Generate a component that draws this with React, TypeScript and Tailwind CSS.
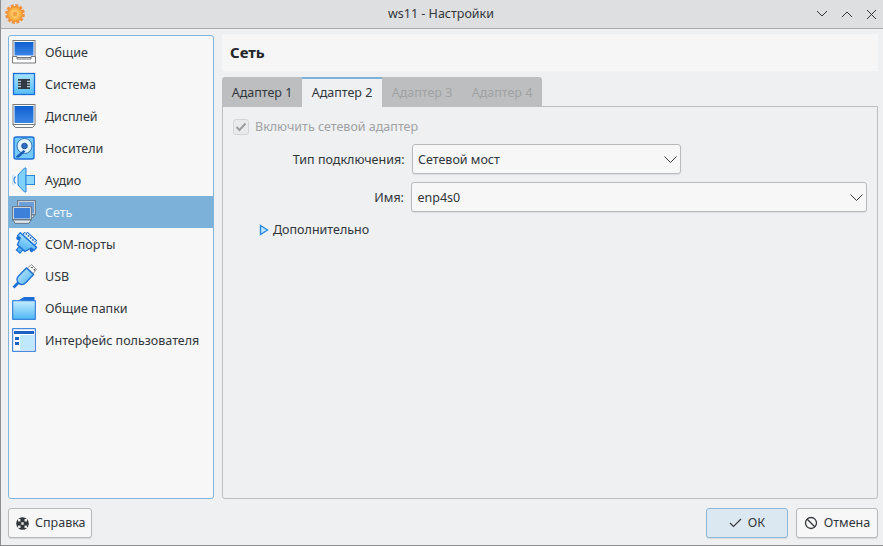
import React from "react";

const Monitor = ({ base }: { base?: boolean }) => (
  <svg width="24" height="24" viewBox="0 0 24 24">
    <defs>
      <linearGradient id="scr" x1="0" y1="0" x2="0" y2="1">
        <stop offset="0" stopColor="#0f5fd0" />
        <stop offset="1" stopColor="#3b86e4" />
      </linearGradient>
    </defs>
    <rect x="1" y="0.500" width="22" height={base ? 17 : 20} fill="#fff" stroke="#77797b" />
    <rect x="2.500" y="2" width="19" height={base ? 13.500 : 17} fill="url(#scr)" />
    {base ? (
      <path d="M0.500 16.500h4.500v2.500h14v-2.500h4.500v6.500H0.500z" fill="#fff" stroke="#77797b" />
    ) : (
      <path d="M1 20.500h22l-2.500 3h-17z" fill="#fff" stroke="#77797b" />
    )}
  </svg>
);

const Sys = () => (
  <svg width="24" height="24" viewBox="0 0 24 24">
    <defs>
      <linearGradient id="sb" x1="0" y1="0" x2="0" y2="1">
        <stop offset="0" stopColor="#a5e3ff" />
        <stop offset="1" stopColor="#55bdf5" />
      </linearGradient>
    </defs>
    <rect x="1.500" y="1.500" width="21" height="21" fill="url(#sb)" stroke="#1c6fd6" strokeWidth="1.300" />
    <rect x="6" y="7" width="12" height="10" fill="#333a46" />
    <path d="M6 9.300h3M6 12h3M6 14.700h3M15 9.300h3M15 12h3M15 14.700h3" stroke="#dff3ff" strokeWidth="1" />
  </svg>
);

const Disk = () => (
  <svg width="24" height="24" viewBox="0 0 24 24">
    <rect x="2" y="1" width="20" height="22" rx="2" fill="#74cbf9" stroke="#1c6fd6" strokeWidth="1.400" />
    <circle cx="12.500" cy="10" r="7.500" fill="#e4f6ff" stroke="#1c4f9c" strokeWidth="0.800" />
    <circle cx="12.500" cy="10" r="2.800" fill="#2e6fc8" stroke="#123e7e" strokeWidth="0.800" />
    <path d="M4 20.500l7.500-6.500 2 1.500-6.500 6H4z" fill="#1c5db8" />
  </svg>
);

const Audio = () => (
  <svg width="24" height="26" viewBox="0 0 24 26">
    <path d="M6 8L12.500 1H14v24h-1.500L6 18z" fill="#7fd1fa" stroke="#2f86d8" />
    <rect x="14" y="8.500" width="8.500" height="9" fill="#8fd8fb" stroke="#2f86d8" />
    <path d="M3.500 9.500c-2 2-2 5 0 7" fill="none" stroke="#2f86d8" strokeWidth="1.300" />
    <path d="M1.800 7.500c-2.400 3-2.400 8 0 11" fill="none" stroke="#a6d2f3" strokeWidth="0.900" />
  </svg>
);

const Net = () => (
  <svg width="24" height="24" viewBox="0 0 24 24">
    <rect x="5.700" y="0.700" width="17.600" height="14" fill="#e6ecf2" stroke="#5f6d7a" />
    <rect x="7" y="2" width="15" height="11.500" fill="#6a9edb" />
    <path d="M8 15h14l-1 2.500H9z" fill="#dfe7ee" stroke="#5f6d7a" strokeWidth="0.700" />
    <rect x="0.700" y="6.700" width="18.600" height="13" fill="#e6ecf2" stroke="#5f6d7a" />
    <rect x="2" y="8" width="16" height="10.500" fill="#3c80da" />
    <path d="M1 20h18l-2 3.300H3z" fill="#e6ebf0" stroke="#5f6d7a" strokeWidth="0.900" />
  </svg>
);

const Com = () => (
  <svg width="25" height="25" viewBox="0 0 25 25">
    <defs>
      <linearGradient id="cb" x1="0" y1="0" x2="1" y2="1">
        <stop offset="0" stopColor="#a5e3ff" />
        <stop offset="1" stopColor="#3fa5ee" />
      </linearGradient>
    </defs>
    <g transform="rotate(42 12.500 12.500)">
      <rect x="4.500" y="1.500" width="16" height="5" fill="#dff2fc" stroke="#1c6fd6" />
      <path d="M6 3.500h13" stroke="#1c4f9c" strokeWidth="1.500" strokeDasharray="1.500 1.500" />
      <path d="M1.500 6.500h22v4H20l-2.500 7h-10L5 10.500H1.500z" fill="url(#cb)" stroke="#1c6fd6" strokeWidth="1.300" />
      <circle cx="3.500" cy="12" r="1.900" fill="#1c6fd6" />
      <circle cx="21.500" cy="12" r="1.900" fill="#1c6fd6" />
      <rect x="10" y="17.500" width="5" height="4.500" fill="#4fb0f0" stroke="#1c6fd6" />
    </g>
  </svg>
);

const Usb = () => (
  <svg width="25" height="25" viewBox="0 0 25 25">
    <defs>
      <linearGradient id="ub" x1="0" y1="0" x2="1" y2="1">
        <stop offset="0" stopColor="#c8eeff" />
        <stop offset="1" stopColor="#45aef0" />
      </linearGradient>
    </defs>
    <path d="M15.500 4L19.500 0.500l5 5-3.500 4z" fill="#fff" stroke="#8a8c8e" />
    <path d="M19.500 3l1 1M21.800 5.300l1 1" stroke="#3a3c3e" strokeWidth="1.300" />
    <path d="M14.500 4l7 6.500-7.500 8c-2.500 2.500-5.500 2.500-7.500.500s-2-5 .500-7.500z" fill="url(#ub)" stroke="#1c6fd6" strokeWidth="1.300" />
    <path d="M6.500 18.500L1.500 23.500" stroke="#1c6fd6" strokeWidth="2.600" />
  </svg>
);

const Folder = () => (
  <svg width="24" height="24" viewBox="0 0 24 24">
    <defs>
      <linearGradient id="fb" x1="0" y1="0" x2="0" y2="1">
        <stop offset="0" stopColor="#c5edff" />
        <stop offset="1" stopColor="#4fb8f4" />
      </linearGradient>
    </defs>
    <path d="M7 4l5-3h10.500v4z" fill="#1c6fd6" />
    <rect x="0.700" y="4.700" width="22.600" height="18.600" fill="url(#fb)" stroke="#1c6fd6" />
  </svg>
);

const Ui = () => (
  <svg width="24" height="24" viewBox="0 0 24 24">
    <rect x="0.700" y="0.700" width="22.600" height="22.600" fill="#fff" stroke="#1c6fd6" />
    <rect x="2" y="3" width="20" height="3" fill="#1c62c4" />
    <rect x="3" y="9" width="4" height="3" fill="#1c62c4" />
    <rect x="3" y="14" width="4" height="3" fill="#1c62c4" />
    <rect x="8" y="7" width="14" height="15" fill="#bfe8fc" />
  </svg>
);

const items: [string, React.ReactNode][] = [
  ["Общие", <Monitor base />],
  ["Система", <Sys />],
  ["Дисплей", <Monitor />],
  ["Носители", <Disk />],
  ["Аудио", <Audio />],
  ["Сеть", <Net />],
  ["COM-порты", <Com />],
  ["USB", <Usb />],
  ["Общие папки", <Folder />],
  ["Интерфейс пользователя", <Ui />],
];

const Chevron = () => (
  <svg width="13" height="7" viewBox="0 0 13 7" className="shrink-0">
    <path d="M0.500 0.500l6 6 6-6" fill="none" stroke="#31363b" strokeWidth="1" />
  </svg>
);

const Combo = ({ text, className }: { text: string; className: string }) => (
  <div className={`h-[30px] flex items-center justify-between pl-[5px] pr-[3px] bg-[#f7f7f7] border border-[#b9babb] rounded-[3px] shadow-[0_1px_1px_rgba(0,0,0,0.08)] ${className}`}>
    <span className="pt-[2px]">{text}</span>
    <Chevron />
  </div>
);

const Btn = ({ children, className }: { children: React.ReactNode; className: string }) => (
  <div className={`h-[30px] flex items-center border rounded-[3px] shadow-[0_1px_1px_rgba(0,0,0,0.1)] ${className}`}>{children}</div>
);

export default function App() {
  return (
    <div
      className="w-[883px] h-[546px] flex flex-col bg-[#eff0f1] text-[#31363b] text-[12.5px] border-l border-b border-[#8d8f91] overflow-hidden"
      style={{ fontFamily: '"Noto Sans", sans-serif' }}
    >
      <div className="h-[29px] shrink-0 -ml-px grid grid-cols-[1fr_auto_1fr] items-center bg-[#dedfe0] border-b border-[#a9abad] pl-[5px] pr-[6px]">
        <svg width="20" height="20" viewBox="0 0 20 20">
          <defs>
            <radialGradient id="g">
              <stop offset="0" stopColor="#ffe08a" />
              <stop offset="0.700" stopColor="#f9b044" />
              <stop offset="1" stopColor="#ee8a2c" />
            </radialGradient>
          </defs>
          <circle cx="10" cy="10" r="8.600" fill="none" stroke="#ee9448" strokeWidth="2.600" strokeDasharray="3 1.500" />
          <circle cx="10" cy="10" r="8" fill="url(#g)" />
          <circle cx="10" cy="10" r="2.300" fill="#f0a040" />
        </svg>
        <div className="text-[#31363b]">ws11 - Настройки</div>
        <div className="flex justify-end items-center gap-[13px]">
          <svg width="12" height="8" viewBox="0 0 12 8"><path d="M1 1l5 5 5-5" fill="none" stroke="#31363b" /></svg>
          <svg width="12" height="8" viewBox="0 0 12 8"><path d="M1 7l5-5 5 5" fill="none" stroke="#31363b" /></svg>
          <svg width="11" height="11" viewBox="0 0 11 11"><path d="M1 1l9 9M10 1l-9 9" stroke="#31363b" /></svg>
        </div>
      </div>

      <div className="flex-1 flex flex-col pl-[7px] pr-[5px]">
        <div className="h-[470px] flex gap-2 pt-[5px] shrink-0">
          <div className="w-[206px] h-[464px] mt-px bg-[#f7f7f7] border border-[#7fb5dc] rounded-[3px] overflow-hidden">
            {items.map(([label, icon], i) => (
              <div
                key={label}
                className={`h-[32px] flex items-center gap-[7px] pl-[1px] ${i === 5 ? "bg-[#7cb1da] text-[#eff6fb]" : ""}`}
              >
                <span className="w-[28px] h-[28px] flex items-center justify-center shrink-0">{icon}</span>
                <span className="pt-[2px]">{label}</span>
              </div>
            ))}
          </div>
          <div className="w-[656px] flex flex-col">
            <div className="h-[37px] shrink-0 bg-[#f6f6f6] flex items-center pl-[8px] font-bold text-[15px] text-[#232629]">Сеть</div>
            <div className="mt-[6px] h-[30px] shrink-0 flex items-stretch w-[320px] bg-[#bdbebf] rounded-t-[3px] relative z-10">
              <div className="w-[80px] flex items-center justify-center pt-[2px]">Адаптер 1</div>
              <div className="w-[80px] flex items-center justify-center bg-[#eff0f1] border-t-2 border-[#7cb1da]">Адаптер 2</div>
              <div className="w-[80px] flex items-center justify-center pt-[2px] text-[#a0a2a4]">Адаптер 3</div>
              <div className="w-[80px] flex items-center justify-center pt-[2px] text-[#a0a2a4]">Адаптер 4</div>
            </div>
            <div className="-mt-px flex-1 border border-[#bcbdbe] rounded-b-[3px] pl-[10px] pr-[10px] pt-[11px]">
              <div className="flex items-center gap-[6px] h-[18px] text-[#a0a2a4]">
                <span className="w-[16px] h-[16px] flex items-center justify-center border border-[#d4d5d6] rounded-[3px] bg-[#e9eaeb]">
                  <svg width="12" height="10" viewBox="0 0 12 10"><path d="M1.500 5l3 3 6-6.500" fill="none" stroke="#9b9d9f" strokeWidth="2" /></svg>
                </span>
                Включить сетевой адаптер
              </div>
              <div className="mt-[8px] flex items-center gap-[7.500px]">
                <span className="w-[171.500px] text-right pt-[2px]">Тип подключения:</span>
                <Combo text="Сетевой мост" className="w-[269px]" />
              </div>
              <div className="mt-[8px] flex items-center gap-[7.500px]">
                <span className="w-[171.500px] text-right pt-[2px]">Имя:</span>
                <Combo text="enp4s0" className="w-[457px]" />
              </div>
              <div className="mt-[8px] ml-[26px] flex items-center gap-[4px] h-[20px]">
                <svg width="10" height="12" viewBox="0 0 10 12"><path d="M1.500 1.500l7 4.500-7 4.500z" fill="#bfe6fb" stroke="#2c8ae0" strokeWidth="1.400" /></svg>
                Дополнительно
              </div>
            </div>
          </div>
        </div>
        <div className="flex-1 flex items-start justify-between pt-[9px]">
          <Btn className="w-[84px] gap-[6px] pl-[7px] bg-[#f7f7f7] border-[#b9babb]">
            <svg width="13" height="13" viewBox="0 0 13 13">
              <circle cx="6.500" cy="6.500" r="6.300" fill="#31363b" />
              <path d="M2 2h2.500v2.500H2zM8.500 2H11v2.500H8.500zM2 8.500h2.500V11H2zM8.500 8.500H11V11H8.500zM5.300 5.300h2.400v2.400H5.300z" fill="#e8e8e8" />
            </svg>
            Справка
          </Btn>
          <div className="flex gap-[8px]">
            <Btn className="w-[82px] justify-center gap-[6px] bg-[#dce8f1] border-[#8fb8d6]">
              <svg width="13" height="10" viewBox="0 0 13 10"><path d="M1 5l3.500 3.500L12 1" fill="none" stroke="#31363b" strokeWidth="1.100" /></svg>
              ОК
            </Btn>
            <Btn className="w-[82px] justify-center gap-[6px] bg-[#f7f7f7] border-[#b9babb]">
              <svg width="14" height="14" viewBox="0 0 14 14"><circle cx="7" cy="7" r="5.500" fill="none" stroke="#31363b" strokeWidth="1.300" /><path d="M3 3l8 8" stroke="#31363b" strokeWidth="1.300" /></svg>
              Отмена
            </Btn>
          </div>
        </div>
      </div>
    </div>
  );
}
